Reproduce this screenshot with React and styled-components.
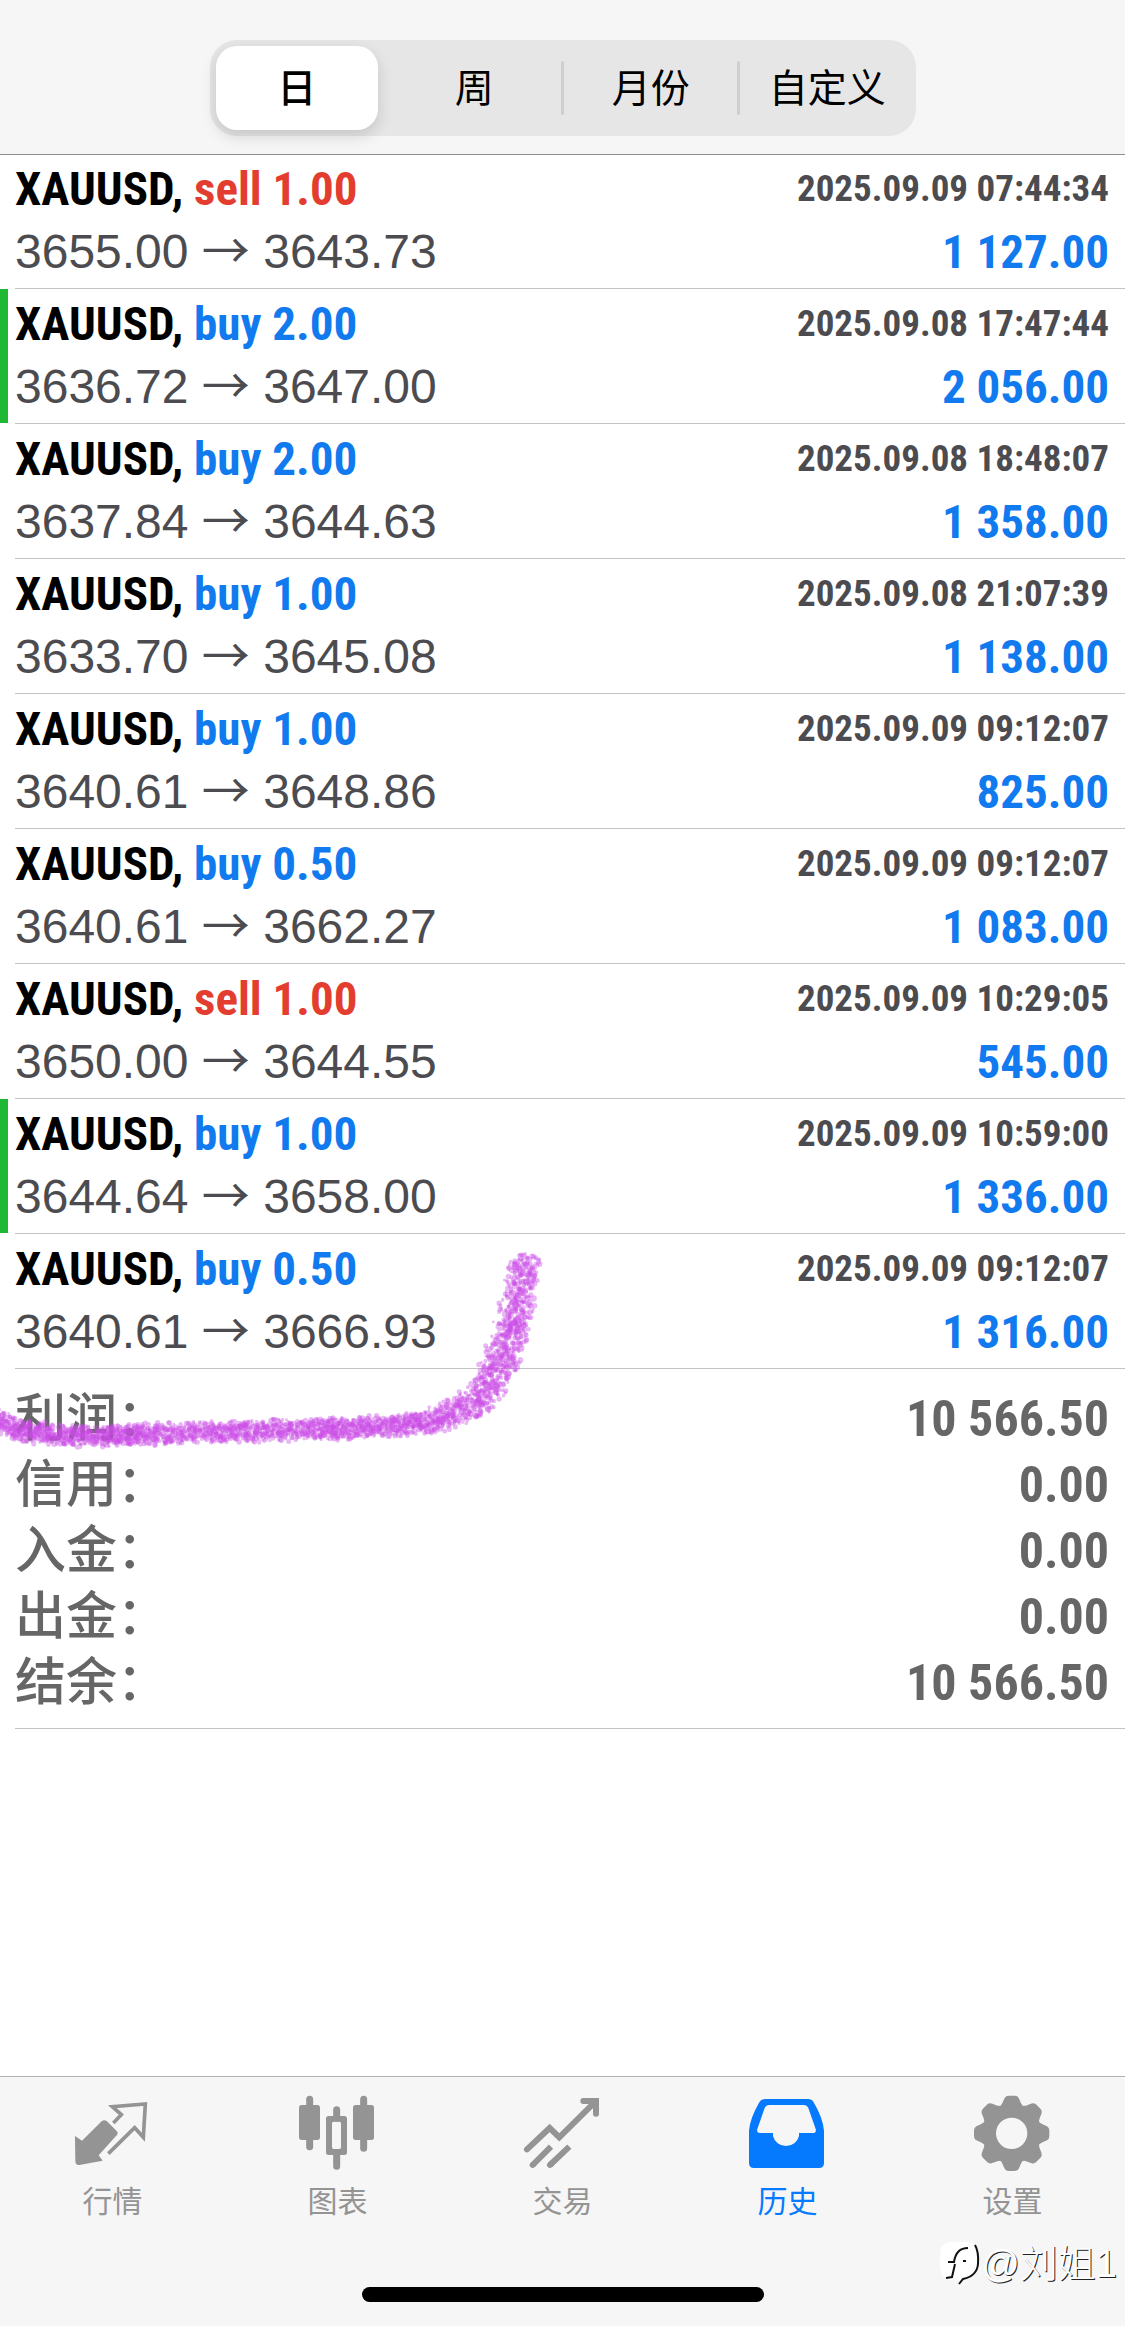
import React from "react";
import styled, { createGlobalStyle } from "styled-components";

const latin = '"Liberation Sans", "Noto Sans CJK SC", sans-serif';
const narrow = '"Roboto Condensed", "Arial Narrow", Roboto, sans-serif';
const arrows = '"Noto Sans CJK SC", sans-serif';

const GlobalStyle = createGlobalStyle`
  * { box-sizing: border-box; }
  html, body { margin: 0; background: #fff; }
`;

const Screen = styled.div`
  position: relative;
  display: flex;
  flex-direction: column;
  min-height: 100vh;
  overflow: hidden;
  background: #fff;
  font-family: ${latin};
`;

const Header = styled.header`
  display: flex;
  justify-content: center;
  padding: 40px 24px 18px;
  margin-bottom: -1px;
  background: #f6f6f6;
  border-bottom: 1px solid #8e8e90;
  z-index: 1;
`;

const Segmented = styled.div`
  display: grid;
  grid-template-columns: repeat(4, 1fr);
  width: 100%;
  max-width: 706px;
  height: 96px;
  border-radius: 27px;
  background: #e6e6e7;
`;

const Segment = styled.button`
  position: relative;
  margin: ${(p) => (p.$active ? "6px 8px 6px 6px" : "6px 0")};
  padding: 2px 0 0;
  border: 0;
  border-radius: 21px;
  background: ${(p) => (p.$active ? "#fff" : "transparent")};
  box-shadow: ${(p) => (p.$active ? "0 6px 16px rgba(0, 0, 0, 0.14)" : "none")};
  color: #000;
  font-family: ${latin};
  font-size: 39px;
  font-weight: ${(p) => (p.$active ? 500 : 400)};
  line-height: 82px;

  &::before {
    content: "";
    display: ${(p) => (p.$divided ? "block" : "none")};
    position: absolute;
    left: -2px;
    top: 15px;
    width: 3px;
    height: 54px;
    border-radius: 2px;
    background: #cfcfd2;
  }
`;

const List = styled.ul`
  margin: 0;
  padding: 0;
  list-style: none;
`;

const Deal = styled.li`
  display: flex;
  height: 135px;
  padding-left: 15px;
  background: linear-gradient(#1fb834, #1fb834) no-repeat left top / ${(p) => (p.$marked ? "8px" : "0")} 134px;
`;

const DealBody = styled.div`
  display: flex;
  flex: 1;
  flex-direction: column;
  gap: 1px;
  padding: 4px 16px 0 0;
  border-bottom: 1px solid #c4c4c7;
`;

const Line = styled.div`
  display: flex;
  justify-content: space-between;
  align-items: center;
  height: 62px;
  white-space: nowrap;
`;

const Symbol = styled.span`
  font-family: ${narrow};
  font-size: 47px;
  font-weight: 700;
  line-height: 62px;
  color: #000;
`;

const Side = styled.span`
  color: ${(p) => (p.$side === "sell" ? "#e23d2e" : "#107aee")};
`;

const Time = styled.time`
  font-family: ${narrow};
  font-size: 37px;
  font-weight: 700;
  line-height: 62px;
  color: #4c4c50;
`;

const Prices = styled.span`
  font-size: 48px;
  line-height: 62px;
  color: #4c4c50;
`;

const Arrow = styled.span`
  font-family: ${arrows};
  line-height: 1;
`;

const Profit = styled.span`
  font-family: ${narrow};
  font-size: 47px;
  font-weight: 700;
  line-height: 62px;
  color: #107aee;
`;

const Summary = styled.dl`
  margin: 0 0 0 15px;
  padding: 17px 16px 12px 0;
  border-bottom: 1px solid #c4c4c7;
`;

const Total = styled.div`
  display: flex;
  justify-content: space-between;
  align-items: center;
  height: 66px;
  color: #666;
`;

const TotalName = styled.dt`
  font-size: 51px;
  font-weight: 500;
  line-height: 66px;
`;

const TotalValue = styled.dd`
  margin: 0;
  font-family: ${narrow};
  font-size: 50px;
  font-weight: 700;
  line-height: 66px;
`;

const Footer = styled.footer`
  display: flex;
  flex-direction: column;
  align-items: center;
  margin-top: auto;
  padding-bottom: 24px;
  background: #f6f6f6;
  border-top: 1px solid #b2b2b4;
`;

const Tabs = styled.nav`
  display: grid;
  grid-template-columns: repeat(5, 1fr);
  width: 100%;
  height: 210px;
`;

const Tab = styled.a`
  display: flex;
  flex-direction: column;
  align-items: center;
  gap: 9px;
  padding-top: 19px;
  color: ${(p) => (p.$active ? "#057aff" : "#949494")};
  font-size: 30px;
  line-height: 44px;
  text-decoration: none;

  svg {
    width: 75px;
    height: 75px;
    overflow: visible;
  }
`;

const HomeIndicator = styled.div`
  width: 402px;
  height: 15px;
  border-radius: 8px;
  background: #000;
`;

const Stroke = styled.svg`
  position: absolute;
  left: 0;
  top: 1240px;
  width: 560px;
  height: 220px;
  pointer-events: none;
`;

const Watermark = styled.div`
  position: absolute;
  right: 8px;
  bottom: 34px;
  display: flex;
  align-items: center;
  color: #fff;
  font-size: 38px;
  font-weight: 300;
  line-height: 56px;
  text-shadow: 1px 1px 0 #222;

  svg {
    width: 42px;
    height: 48px;
  }
`;

const deals = [
  ["sell", "1.00", "2025.09.09 07:44:34", "3655.00", "3643.73", "1 127.00"],
  ["buy", "2.00", "2025.09.08 17:47:44", "3636.72", "3647.00", "2 056.00", true],
  ["buy", "2.00", "2025.09.08 18:48:07", "3637.84", "3644.63", "1 358.00"],
  ["buy", "1.00", "2025.09.08 21:07:39", "3633.70", "3645.08", "1 138.00"],
  ["buy", "1.00", "2025.09.09 09:12:07", "3640.61", "3648.86", "825.00"],
  ["buy", "0.50", "2025.09.09 09:12:07", "3640.61", "3662.27", "1 083.00"],
  ["sell", "1.00", "2025.09.09 10:29:05", "3650.00", "3644.55", "545.00"],
  ["buy", "1.00", "2025.09.09 10:59:00", "3644.64", "3658.00", "1 336.00", true],
  ["buy", "0.50", "2025.09.09 09:12:07", "3640.61", "3666.93", "1 316.00"],
];

const totals = [
  ["利润：", "10 566.50"],
  ["信用：", "0.00"],
  ["入金：", "0.00"],
  ["出金：", "0.00"],
  ["结余：", "10 566.50"],
];

const QuotesIcon = () => (
  <svg viewBox="225 108 225 225" aria-hidden="true" fill="currentColor">
    <path d="M225 228 L246 242 L305 184 Q313 177 321 184 L350 213 Q356 219 350 226 L296 286 L308 302 L238 315 Q226 316 226 304 Z" />
    <path d="M340 189 L364 164 L337 140 L436 132 L430 232 L404 203 L325 281" fill="none" stroke="currentColor" strokeWidth="11" />
  </svg>
);

const ChartIcon = () => (
  <svg viewBox="900 108 225 225" aria-hidden="true" fill="currentColor">
    <path d="M929 118V260M1091 118V265M1010 149V175M1010 280V319" stroke="currentColor" strokeWidth="21" strokeLinecap="round" />
    <rect x="897" y="135" width="63" height="105" rx="8" />
    <rect x="1059" y="135" width="63" height="105" rx="8" />
    <path fillRule="evenodd" d="M986 168H1033Q1041 168 1041 176V277Q1041 285 1033 285H986Q978 285 978 277V176Q978 168 986 168ZM1001 185Q996 185 996 190V262Q996 267 1001 267H1018Q1023 267 1023 262V190Q1023 185 1018 185Z" />
  </svg>
);

const TradeIcon = () => (
  <svg viewBox="135 108 225 225" aria-hidden="true" fill="none" stroke="currentColor" strokeWidth="18" strokeLinecap="round">
    <path d="M141 268L209 204L238 232L346 125M310 123H348V161" />
    <path d="M158 315L213 260M210 315L268 260" strokeLinecap="butt" />
    <path d="M158 315L160 313M210 315L212 313" />
  </svg>
);

const HistoryIcon = () => (
  <svg viewBox="810 108 225 225" aria-hidden="true" fill="currentColor">
    <path fillRule="evenodd" d="M856 117H984Q995 117 1001 127Q1029 175 1032 212V309Q1032 324 1017 324H822Q807 324 807 309V212Q810 175 838 127Q844 117 856 117ZM868 135Q858 135 854 144L832 207Q829 219 840 219H879V228A40 39 0 0 0 957 228V219H998Q1010 219 1007 207L985 144Q981 135 971 135Z" />
  </svg>
);

const gearTooth = "M-36 -80 C-27 -88 -26 -97 -21 -106 Q-17 -113 -9 -113 H9 Q17 -113 21 -106 C26 -97 27 -88 36 -80 Z";

const SettingsIcon = () => (
  <svg viewBox="345 108 225 225" aria-hidden="true" fill="currentColor">
    <g transform="translate(455 220)">
      {[0, 45, 90, 135, 180, 225, 270, 315].map((a) => (
        <path key={a} d={gearTooth} transform={`rotate(${a})`} />
      ))}
      <circle r="67" fill="none" stroke="currentColor" strokeWidth="40" />
    </g>
  </svg>
);

const tabs = [
  ["行情", QuotesIcon],
  ["图表", ChartIcon],
  ["交易", TradeIcon],
  ["历史", HistoryIcon],
  ["设置", SettingsIcon],
];

// Centre line of the crayon mark: x, y, half width, dots per pixel.
const crayonLine = [
  [-10, 174, 11, 5],
  [4, 184, 11, 6],
  [22, 191, 11, 6],
  [74, 196, 10, 6],
  [166, 194, 11, 5],
  [237, 191, 11, 5],
  [314, 189, 11, 6],
  [390, 187, 11, 6],
  [425, 182, 12, 6],
  [462, 171, 15, 6],
  [484, 154, 16, 6],
  [497, 130, 18, 6],
  [509, 100, 18, 6],
  [517, 66, 17, 5],
  [523, 38, 17, 5],
  [526, 16, 14, 4],
];

function crayonLayers(count) {
  let seed = 7;
  const random = () => {
    seed = (seed * 16807) % 2147483647;
    return seed / 2147483647;
  };
  const layers = Array.from({ length: count }, () => "");
  let n = 0;
  for (let i = 1; i < crayonLine.length; i += 1) {
    const [x0, y0, w0, d0] = crayonLine[i - 1];
    const [x1, y1, w1] = crayonLine[i];
    const length = Math.hypot(x1 - x0, y1 - y0);
    for (let k = 0; k < length * d0; k += 1) {
      const t = random();
      const across = (random() + random() * 0.5 - 0.75) * 1.5 * (w0 + (w1 - w0) * t);
      const along = t + ((random() - 0.5) * 10) / length;
      const x = x0 + (x1 - x0) * along - ((y1 - y0) / length) * across;
      const y = y0 + (y1 - y0) * along + ((x1 - x0) / length) * across;
      const r = 1.4 + random() * 1.4;
      layers[n % count] += `M${(x - r).toFixed(1)} ${y.toFixed(1)}a${r.toFixed(1)} ${r.toFixed(1)} 0 1 0 ${(2 * r).toFixed(1)} 0a${r.toFixed(1)} ${r.toFixed(1)} 0 1 0 ${(-2 * r).toFixed(1)} 0`;
      n += 1;
    }
  }
  return layers;
}

const layers = crayonLayers(8);

const Crayon = () => (
  <Stroke viewBox="0 0 560 220" aria-hidden="true">
    {layers.map((d, i) => (
      <path key={i} d={d} fill="#cb4ce6" opacity="0.4" />
    ))}
  </Stroke>
);

const WatermarkLogo = () => (
  <svg viewBox="0 0 42 48" aria-hidden="true">
    <path d="M10 2H28Q40 4 40 18V24Q39 38 24 40L20 45V40H10Q1 38 1 24V14Q1 4 10 2Z" fill="#fff" />
    <path d="M36 5Q40 12 39 24Q38 36 24 39L20 44" fill="none" stroke="#111" strokeWidth="2" />
    <path d="M7 38L13 37L16 24M9 22H15Q17 8 29 8M24 21H27" fill="none" stroke="#111" strokeWidth="2" />
  </svg>
);

export default function App() {
  return (
    <Screen>
      <GlobalStyle />
      <Header>
        <Segmented>
          {["日", "周", "月份", "自定义"].map((name, i) => (
            <Segment key={name} type="button" $active={i === 0} $divided={i > 1} aria-pressed={i === 0}>
              {name}
            </Segment>
          ))}
        </Segmented>
      </Header>
      <main>
        <List>
          {deals.map(([side, volume, time, open, close, profit, marked]) => (
            <Deal key={time + close} $marked={marked}>
              <DealBody>
                <Line>
                  <Symbol>
                    XAUUSD, <Side $side={side}>{side} {volume}</Side>
                  </Symbol>
                  <Time>{time}</Time>
                </Line>
                <Line>
                  <Prices>
                    {open} <Arrow>→</Arrow> {close}
                  </Prices>
                  <Profit>{profit}</Profit>
                </Line>
              </DealBody>
            </Deal>
          ))}
        </List>
        <Summary>
          {totals.map(([name, value]) => (
            <Total key={name}>
              <TotalName>{name}</TotalName>
              <TotalValue>{value}</TotalValue>
            </Total>
          ))}
        </Summary>
      </main>
      <Footer>
        <Tabs>
          {tabs.map(([name, Icon]) => (
            <Tab key={name} href="#" $active={name === "历史"}>
              <Icon />
              {name}
            </Tab>
          ))}
        </Tabs>
        <HomeIndicator />
      </Footer>
      <Crayon />
      <Watermark>
        <WatermarkLogo />
        <span>@刘姐1</span>
      </Watermark>
    </Screen>
  );
}
